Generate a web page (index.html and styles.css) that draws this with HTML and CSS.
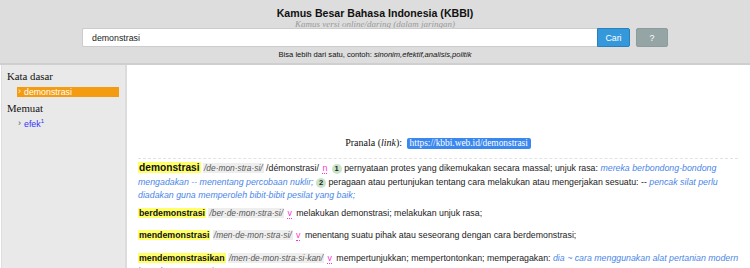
FILE: index.html
```html
<!DOCTYPE html>
<html lang="id">
<head>
  <meta charset="UTF-8">
  <meta name="viewport" content="width=device-width, initial-scale=1.0">
  <title>KBBI - demonstrasi</title>
  <link rel="stylesheet" href="styles.css">
</head>
<body>
  <header class="top">
    <h1 class="title">Kamus Besar Bahasa Indonesia (KBBI)</h1>
    <div class="subtitle">Kamus versi online/daring (dalam jaringan)</div>
    <form class="search">
      <input class="search-input" type="text" value="demonstrasi">
      <button class="btn btn-cari" type="button">Cari</button>
      <button class="btn btn-help" type="button">?</button>
    </form>
    <div class="hint">Bisa lebih dari satu, contoh: <i>sinonim,efektif,analisis,politik</i></div>
  </header>

  <div class="page">
    <aside class="sidebar">
      <h3 class="side-head">Kata dasar</h3>
      <a class="side-item active" href="#">demonstrasi</a>
      <h3 class="side-head">Memuat</h3>
      <a class="side-item" href="#">efek<sup>1</sup></a>
    </aside>

    <main class="content">
      <div class="pranala">
        Pranala (<i>link</i>): <span class="pranala-url">https://kbbi.web.id/demonstrasi</span>
      </div>

      <div class="entry entry-main">
        <b class="hw hw-main">demonstrasi</b>
        <span class="pron">/de·mon·stra·si/</span> /démonstrasi/
        <span class="cls">n</span>
        <span class="num">1</span> pernyataan protes yang dikemukakan secara massal; unjuk rasa:
        <i class="ex">mereka berbondong-bondong mengadakan -- menentang percobaan nuklir;</i>
        <span class="num">2</span> peragaan atau pertunjukan tentang cara melakukan atau mengerjakan sesuatu: --
        <i class="ex">pencak silat perlu diadakan guna memperoleh bibit-bibit pesilat yang baik;</i>
      </div>

      <div class="entry">
        <b class="hw">berdemonstrasi</b>
        <span class="pron">/ber·de·mon·stra·si/</span>
        <span class="cls">v</span>
        melakukan demonstrasi; melakukan unjuk rasa;
      </div>

      <div class="entry">
        <b class="hw">mendemonstrasi</b>
        <span class="pron">/men·de·mon·stra·si/</span>
        <span class="cls">v</span>
        menentang suatu pihak atau seseorang dengan cara berdemonstrasi;
      </div>

      <div class="entry">
        <b class="hw">mendemonstrasikan</b>
        <span class="pron">/men·de·mon·stra·si·kan/</span>
        <span class="cls">v</span>
        mempertunjukkan; mempertontonkan; memperagakan:
        <i class="ex">dia ~ cara menggunakan alat pertanian modern kepada para petani;</i>
      </div>
    </main>
  </div>
</body>
</html>
```

FILE: styles.css
```css
body {
  margin: 0;
  padding: 0;
  font-family: "Liberation Sans", Arial, sans-serif;
  font-size: 8.8px;
  color: #222;
  background: #fff;
}

/* header */
.top {
  background: #dddddd;
  border-bottom: 2px solid #cfcfcf;
  padding-top: 7px;
  height: 56px;
  text-align: center;
}
.title {
  margin: 0;
  font-size: 10.6px;
  line-height: 13px;
  color: #111;
}
.subtitle {
  font-family: "Liberation Serif", "Times New Roman", serif;
  font-style: italic;
  font-size: 9px;
  line-height: 8px;
  color: #9a9a9a;
}
.search {
  display: flex;
  justify-content: center;
  align-items: stretch;
  height: 19px;
  margin: 0;
}
.search-input {
  box-sizing: border-box;
  width: 515px;
  height: 19px;
  margin: 0;
  padding: 0 9px;
  border: 1px solid #cccccc;
  border-right: none;
  border-radius: 2px 0 0 2px;
  font-family: "Liberation Sans", Arial, sans-serif;
  font-size: 8.8px;
  color: #222;
  background: #fff;
}
.btn {
  box-sizing: border-box;
  height: 19px;
  margin: 0;
  padding: 0;
  border-radius: 2px;
  font-family: "Liberation Sans", Arial, sans-serif;
  font-size: 8.8px;
  color: #fff;
  cursor: pointer;
}
.btn-cari {
  width: 33px;
  background: #3498db;
  border: 1px solid #2a80bd;
  border-radius: 0 2px 2px 0;
}
.btn-help {
  width: 32px;
  margin-left: 6px;
  background: #95a5a6;
  border: 1px solid #8c9b9c;
}
.hint {
  margin-top: 1px;
  font-size: 7.6px;
  line-height: 14px;
  color: #111;
}

/* body */
.page {
  display: flex;
  align-items: stretch;
  min-height: 203px;
}
.sidebar {
  width: 112px;
  margin-left: 1px;
  padding: 5px 6px 10px 5px;
  background: #e9e9e9;
  border-left: 1px solid #dedede;
  border-right: 2px solid #dcdcdc;
  flex-shrink: 0;
}
.side-head {
  margin: 0;
  font-family: "Liberation Serif", "Times New Roman", serif;
  font-weight: normal;
  font-size: 10.8px;
  line-height: 13px;
  color: #111;
}
.side-head + .side-item {
  margin-top: 4px;
}
.side-item + .side-head {
  margin-top: 5px;
}
.side-item {
  display: block;
  margin-left: 10px;
  padding-left: 7px;
  height: 10px;
  line-height: 10px;
  color: #3333ff;
  text-decoration: none;
  position: relative;
}
.side-item::before {
  content: "›";
  position: absolute;
  left: 1px;
  top: -1px;
  color: #555;
  font-size: 9px;
}
.side-item.active {
  background: #f39c12;
  color: #fff;
}
.side-item.active::before {
  color: #fff3d6;
}
.side-item sup {
  font-size: 6px;
  line-height: 0;
}

.content {
  flex: 1;
  padding: 71px 5px 0 11px;
}
.pranala {
  text-align: center;
  font-family: "Liberation Serif", "Times New Roman", serif;
  font-size: 10px;
  line-height: 13px;
  padding-bottom: 9px;
  margin-right: 7px;
  border-bottom: 1px dashed #e2e2e2;
  color: #111;
}
.pranala-url {
  display: inline-block;
  margin-left: 2px;
  padding: 0 3px;
  background: #3b87f0;
  color: #fff;
  font-size: 9.4px;
  line-height: 11px;
  border-radius: 2px;
}

.entry {
  line-height: 13.5px;
  margin-bottom: 8.7px;
}
.entry-main {
  margin-top: 2px;
  margin-bottom: 4.7px;
}
.hw {
  background: #ffff66;
  color: #111;
  padding: 0 1px;
}
.hw-main {
  font-size: 10.2px;
}
.pron {
  background: #eeeeee;
  color: #555;
  font-style: italic;
  font-size: 8.4px;
  padding: 0 1px;
}
.cls {
  color: #ff33cc;
  border-bottom: 1px dotted #ff33cc;
  margin: 0 2px 0 1px;
}
.num {
  display: inline-block;
  width: 10px;
  height: 10px;
  line-height: 10px;
  border-radius: 50%;
  background: #c8e3c8;
  color: #222;
  font-weight: bold;
  font-size: 7.6px;
  text-align: center;
}
.ex {
  color: #4a86e8;
}
```
